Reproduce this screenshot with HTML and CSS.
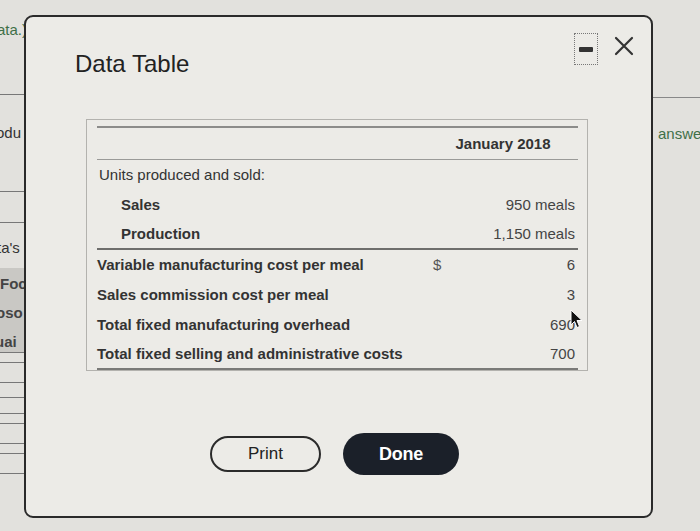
FILE: index.html
```html
<!DOCTYPE html>
<html lang="en">
<head>
<meta charset="utf-8">
<title>Data Table</title>
<link rel="stylesheet" href="styles.css">
</head>
<body>
<div class="page">
  <div class="bg-left">
    <div class="seg seg-a"><span class="green">ata.)</span></div>
    <div class="seg seg-b">odu</div>
    <div class="seg seg-c"></div>
    <div class="seg seg-d">ta's</div>
    <div class="grey-block">
      <div class="gline">Foc</div>
      <div class="gline">oso</div>
      <div class="gline">uai</div>
    </div>
    <div class="seg h10"></div>
    <div class="seg h19"></div>
    <div class="seg h15"></div>
    <div class="seg h16"></div>
    <div class="seg h10"></div>
    <div class="seg h19"></div>
    <div class="seg h10"></div>
    <div class="seg h19"></div>
  </div>
  <div class="bg-right">
    <div class="rseg"></div>
    <div class="rtext green">answe</div>
  </div>

  <div class="dialog">
    <div class="dlg-head">
      <h1 class="dlg-title">Data Table</h1>
      <div class="dlg-controls">
        <button class="ctrl-min" aria-label="Minimize"><span class="dash"></span></button>
        <button class="ctrl-close" aria-label="Close">
          <svg width="20" height="20" viewBox="0 0 20 20"><path d="M2 2 L18 18 M18 2 L2 18" stroke="#333" stroke-width="2.2" fill="none" stroke-linecap="round"/></svg>
        </button>
      </div>
    </div>
    <div class="table-box">
      <table class="data">
        <tr class="head">
          <th class="lbl"></th>
          <th class="hdr" colspan="2">January 2018</th>
        </tr>
        <tr class="first">
          <td class="lbl plain">Units produced and sold:</td><td class="cur"></td><td class="val"></td>
        </tr>
        <tr>
          <td class="lbl ind">Sales</td><td class="cur"></td><td class="val">950 meals</td>
        </tr>
        <tr class="rule">
          <td class="lbl ind">Production</td><td class="cur"></td><td class="val">1,150 meals</td>
        </tr>
        <tr>
          <td class="lbl">Variable manufacturing cost per meal</td><td class="cur">$</td><td class="val">6</td>
        </tr>
        <tr>
          <td class="lbl">Sales commission cost per meal</td><td class="cur"></td><td class="val">3</td>
        </tr>
        <tr>
          <td class="lbl">Total fixed manufacturing overhead</td><td class="cur"></td><td class="val">690</td>
        </tr>
        <tr class="last">
          <td class="lbl">Total fixed selling and administrative costs</td><td class="cur"></td><td class="val">700</td>
        </tr>
      </table>
    </div>
    <div class="actions">
      <button class="btn btn-print">Print</button>
      <button class="btn btn-done">Done</button>
    </div>
  </div>

  <svg class="cursor" width="14" height="20" viewBox="0 0 14 20"><path d="M1 1 L1 16 L4.5 12.5 L7 18.5 L9.5 17.5 L7 11.5 L12 11.5 Z" fill="#111" stroke="#fff" stroke-width="1"/></svg>
</div>
</body>
</html>
```

FILE: styles.css
```css
* { box-sizing: border-box; }
html, body { margin: 0; padding: 0; }
body {
  width: 700px;
  height: 531px;
  overflow: hidden;
  background: #e2e1dd;
  font-family: "Liberation Sans", Arial, sans-serif;
  color: #333;
}
.page {
  position: relative;
  width: 700px;
  height: 531px;
  display: flex;
  justify-content: space-between;
}
.green { color: #3f7048; }

.bg-left {
  width: 28px;
  overflow: hidden;
  display: flex;
  flex-direction: column;
  font-size: 15px;
  color: #333;
  white-space: nowrap;
}
.seg { border-bottom: 1px solid #777; flex: none; }
.seg-a { height: 95px; padding-top: 20px; line-height: 20px; text-indent: -3px; }
.seg-b { height: 97px; padding-top: 28px; line-height: 20px; text-indent: -4px; }
.seg-c { height: 31px; }
.seg-d { height: 45px; padding-top: 15px; line-height: 20px; border-bottom: none; text-indent: -3px; }
.grey-block {
  height: 85px;
  background: #c9c8c4;
  padding-top: 1px;
  font-weight: bold;
  color: #444;
  border-bottom: 1px solid #777;
}
.gline { height: 29px; line-height: 29px; text-indent: 0; }
.gline:nth-child(2) { text-indent: -4px; }
.gline:nth-child(3) { text-indent: -5px; }
.h10 { height: 10px; }
.h15 { height: 15px; }
.h16 { height: 16px; }
.h19 { height: 20px; }

.bg-right {
  width: 48px;
  overflow: hidden;
  white-space: nowrap;
}
.rseg { height: 98px; border-bottom: 1px solid #888; }
.rtext { font-size: 15px; line-height: 20px; padding-top: 26px; padding-left: 6px; }

.dialog {
  position: absolute;
  left: 24px;
  top: 15px;
  width: 629px;
  height: 503px;
  border: 2px solid #2a2a2a;
  border-radius: 9px;
  background: #ecebe7;
  padding: 16px 17px 0 49px;
  display: flex;
  flex-direction: column;
}
.dlg-head {
  display: flex;
  justify-content: space-between;
  align-items: flex-start;
}
.dlg-title {
  margin: 16px 0 0;
  font-size: 24px;
  line-height: 30px;
  font-weight: normal;
  color: #222;
}
.dlg-controls {
  display: flex;
  align-items: flex-start;
  gap: 16px;
}
.ctrl-min {
  width: 24px;
  height: 32px;
  border: 1px dotted #777;
  background: transparent;
  padding: 0;
  display: flex;
  align-items: center;
  justify-content: center;
}
.dash { width: 14px; height: 5px; background: #333; border-radius: 1px; }
.ctrl-close {
  width: 20px;
  height: 20px;
  margin-top: 3px;
  border: none;
  background: transparent;
  padding: 0;
  display: flex;
}

.table-box {
  margin: 40px 0 0 11px;
  width: 502px;
  border: 1px solid #b3b2ae;
  padding: 6px 9px 0 10px;
}
.data {
  width: 100%;
  border-collapse: collapse;
  border-top: 2px solid #8c8c8a;
  font-size: 15px;
  color: #333;
}
.data td, .data th { padding: 0; height: 30px; white-space: nowrap; }
.data .head th { height: 32px; border-bottom: 1px solid #9a9a98; }
.hdr { text-align: center; font-weight: bold; padding-top: 2px; }
.lbl { text-align: left; font-weight: bold; }
.lbl.plain { font-weight: normal; padding-left: 2px; }
.lbl.ind { padding-left: 24px; }
.cur { width: 25px; color: #555; text-align: left; padding-left: 5px !important; }
.val { width: 125px; text-align: right; padding-right: 3px !important; color: #444; }
.rule td { border-bottom: 2px solid #6e6e6c; }
.last td { border-bottom: 2px solid #7a7a78; }

.actions {
  margin-top: 62px;
  display: flex;
  align-items: center;
  gap: 22px;
  padding-left: 135px;
}
.btn {
  font-family: "Liberation Sans", Arial, sans-serif;
  border-radius: 22px;
}
.btn-print {
  width: 111px;
  height: 36px;
  border: 2px solid #2b2b2b;
  background: transparent;
  color: #222;
  font-size: 17px;
}
.btn-done {
  width: 116px;
  height: 42px;
  border: none;
  background: #1b2029;
  color: #fff;
  font-size: 18px;
  font-weight: bold;
  letter-spacing: -0.3px;
}

.cursor {
  position: absolute;
  left: 570px;
  top: 309px;
}
```
